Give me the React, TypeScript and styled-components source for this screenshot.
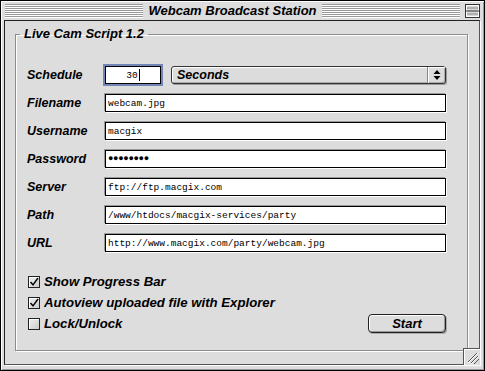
import React, { FC } from 'react';
import styled, { createGlobalStyle } from 'styled-components';

const GlobalStyle = createGlobalStyle`
  html, body {
    margin: 0;
    padding: 0;
    background: #dddddd;
  }
  * {
    box-sizing: border-box;
  }
`;

const chicago = `'Liberation Sans', Arial, sans-serif`;
const monaco = `'Liberation Mono', 'DejaVu Sans Mono', monospace`;

const Window = styled.div`
  position: relative;
  width: 485px;
  height: 371px;
  display: flex;
  flex-direction: column;
  padding: 0 4px 5px 3px;
  border: 1px solid #000;
  background: #dddddd;
  box-shadow: inset 1px 1px 0 #fff, inset -1px -1px 0 #999;
`;

const TitleBar = styled.div`
  height: 19px;
  display: flex;
  align-items: center;
  padding: 0 0 0 1px;
`;

const Stripes = styled.div`
  flex: 1;
  height: 14px;
  background: repeating-linear-gradient(
    to bottom,
    #999999 0px,
    #999999 1px,
    #ffffff 1px,
    #ffffff 2px
  );
`;

const Title = styled.div`
  padding: 0 5px;
  font-family: ${chicago};
  font-weight: 700;
  font-style: italic;
  font-size: 13px;
  line-height: 16px;
  color: #000;
`;

const CollapseBox = styled.div`
  width: 15px;
  height: 14px;
  margin-left: 5px;
  display: flex;
`;

const Content = styled.div`
  flex: 1;
  display: flex;
  flex-direction: column;
  border: 1px solid #222;
  border-right-color: #555;
  border-bottom-color: #555;
  box-shadow: 1px 1px 0 #fff;
`;

const Group = styled.fieldset`
  margin: 5px 11px 0 10px;
  padding: 0;
  min-width: 0;
  border: 1px solid #8c8c8c;
  box-shadow: inset 1px 1px 0 #fff, 1px 1px 0 #fff;
`;

const GroupTitle = styled.legend`
  margin-left: 4px;
  padding: 0 4px;
  font-family: ${chicago};
  font-weight: 700;
  font-style: italic;
  font-size: 13px;
  line-height: 16px;
  color: #000;
`;

const GroupBody = styled.div`
  padding: 24px 21px 16px 11px;
  display: flex;
  flex-direction: column;
  gap: 19px;
`;

const Form = styled.div`
  display: grid;
  grid-template-columns: 78px 1fr;
  grid-auto-rows: 18px;
  row-gap: 10px;
  align-items: center;
`;

const Label = styled.div`
  font-family: ${chicago};
  font-weight: 700;
  font-style: italic;
  font-size: 12.5px;
  color: #000;
  white-space: nowrap;
`;

const Field = styled.div<{ $focused?: boolean; $width?: number; $centered?: boolean }>`
  height: 18px;
  width: ${({ $width }) => ($width ? `${$width}px` : '100%')};
  display: flex;
  align-items: center;
  justify-content: ${({ $centered }) => ($centered ? 'center' : 'flex-start')};
  padding: 0 2px 0 2px;
  background: #fff;
  border: 1px solid #000;
  font-family: ${monaco};
  font-size: 9.5px;
  color: #000;
  white-space: nowrap;
  overflow: hidden;
  box-shadow: ${({ $focused }) =>
    $focused ? '0 0 0 2px #7384b8' : '-1px -1px 0 #9a9a9a, 1px 1px 0 #ffffff'};
`;

const Caret = styled.span`
  display: inline-block;
  width: 1px;
  height: 12px;
  margin-left: 1px;
  background: #000;
`;

const Dots = styled.span`
  font-size: 9px;
  letter-spacing: -0.3px;
`;

const ScheduleRow = styled.div`
  display: flex;
  align-items: center;
  gap: 10px;
`;

const Popup = styled.div`
  flex: 1;
  height: 18px;
  display: flex;
  align-items: center;
  border: 1px solid #333;
  border-radius: 3px;
  background: #dcdcdc;
  box-shadow: inset 1px 1px 0 #fff, inset -1px -1px 0 #aaa, 1px 1px 0 #999;
`;

const PopupText = styled.div`
  flex: 1;
  padding-left: 5px;
  font-family: ${chicago};
  font-weight: 700;
  font-style: italic;
  font-size: 12.5px;
  color: #000;
`;

const PopupArrows = styled.div`
  width: 18px;
  height: 100%;
  display: flex;
  align-items: center;
  justify-content: center;
  border-left: 1px solid #888;
  box-shadow: inset 1px 1px 0 #fff;
`;

const Options = styled.div`
  display: flex;
  flex-direction: column;
  padding-left: 1px;
`;

const OptionRow = styled.div`
  height: 21px;
  display: flex;
  align-items: center;
  justify-content: space-between;
`;

const Check = styled.label`
  display: flex;
  align-items: center;
  gap: 4px;
  font-family: ${chicago};
  font-weight: 700;
  font-style: italic;
  font-size: 13.2px;
  color: #000;
`;

const Box = styled.span`
  width: 12px;
  height: 12px;
  display: flex;
  border: 1px solid #222;
  background: linear-gradient(135deg, #eeeeee, #cccccc);
  box-shadow: inset 1px 1px 0 #fff;
`;

const Button = styled.button`
  width: 78px;
  height: 19px;
  padding: 0;
  border: 1px solid #222;
  border-radius: 4px;
  background: #dddddd;
  box-shadow: inset 1px 1px 0 #fff, inset -1px -1px 0 #999, 1px 1px 0 #aaa;
  font-family: ${chicago};
  font-weight: 700;
  font-style: italic;
  font-size: 13px;
  color: #000;
`;

const GrowBox = styled.div`
  position: absolute;
  right: 4px;
  bottom: 5px;
  width: 17px;
  height: 17px;
  display: flex;
  background: #dddddd;
  border-top: 1px solid #555;
  border-left: 1px solid #555;
  box-shadow: inset 1px 1px 0 #fff;
`;

const CheckMark: FC = () => (
  <svg width="10" height="10" viewBox="0 0 10 10">
    <path d="M1.5 5 L4 7.8 L9 1" fill="none" stroke="#000" strokeWidth="1.4" />
  </svg>
);

const Option: FC<{ checked?: boolean; label: string }> = ({ checked, label }) => (
  <Check>
    <Box>{checked && <CheckMark />}</Box>
    {label}
  </Check>
);

const fields: [string, React.ReactNode][] = [
  ['Filename', 'webcam.jpg'],
  ['Username', 'macgix'],
  ['Password', <Dots key="d">{'\u25CF'.repeat(8)}</Dots>],
  ['Server', 'ftp://ftp.macgix.com'],
  ['Path', '/www/htdocs/macgix-services/party'],
  ['URL', 'http://www.macgix.com/party/webcam.jpg'],
];

const App: FC = () => (
  <>
    <GlobalStyle />
    <Window>
      <TitleBar>
        <Stripes />
        <Title>Webcam Broadcast Station</Title>
        <Stripes />
        <CollapseBox>
          <svg width="15" height="14" viewBox="0 0 15 14">
            <rect x="0.5" y="0.5" width="14" height="13" fill="#d8d8d8" stroke="#333" />
            <rect x="1.5" y="1.5" width="12" height="11" fill="none" stroke="#fff" />
            <line x1="1" y1="7" x2="14" y2="7" stroke="#333" />
            <line x1="2" y1="4" x2="13" y2="4" stroke="#888" />
            <line x1="2" y1="10" x2="13" y2="10" stroke="#888" />
          </svg>
        </CollapseBox>
      </TitleBar>
      <Content>
        <Group>
          <GroupTitle>Live Cam Script 1.2</GroupTitle>
          <GroupBody>
            <Form>
              <Label>Schedule</Label>
              <ScheduleRow>
                <Field $focused $width={56} $centered>
                  30<Caret />
                </Field>
                <Popup>
                  <PopupText>Seconds</PopupText>
                  <PopupArrows>
                    <svg width="8" height="12" viewBox="0 0 8 12">
                      <path d="M4 1 L7.5 5 L0.5 5 Z" fill="#000" />
                      <path d="M4 11 L7.5 7 L0.5 7 Z" fill="#000" />
                    </svg>
                  </PopupArrows>
                </Popup>
              </ScheduleRow>
              {fields.map(([label, value]) => (
                <React.Fragment key={label}>
                  <Label>{label}</Label>
                  <Field>{value}</Field>
                </React.Fragment>
              ))}
            </Form>
            <Options>
              <OptionRow>
                <Option checked label="Show Progress Bar" />
              </OptionRow>
              <OptionRow>
                <Option checked label="Autoview uploaded file with Explorer" />
              </OptionRow>
              <OptionRow>
                <Option label="Lock/Unlock" />
                <Button type="button">Start</Button>
              </OptionRow>
            </Options>
          </GroupBody>
        </Group>
      </Content>
      <GrowBox>
        <svg width="16" height="16" viewBox="0 0 16 16">
          <path d="M4 13 L13 4 M7 14 L14 7 M10 15 L15 10" stroke="#555" strokeWidth="1" />
          <path d="M4 14 L14 4 M7 15 L15 7" stroke="#fff" strokeWidth="1" />
        </svg>
      </GrowBox>
    </Window>
  </>
);

export default App;
